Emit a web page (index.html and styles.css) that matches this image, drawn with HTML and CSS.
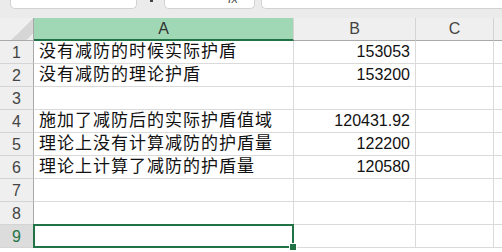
FILE: index.html
```html
<!DOCTYPE html>
<html lang="zh-CN">
<head>
    <meta charset="UTF-8">
    <title>Sheet1</title>
    <link rel="stylesheet" href="styles.css">
</head>
<body>

    <div class="toolbar">
        <div class="box name-box"></div>
        <span class="caret"></span>
        <div class="box fx-box"><span class="fx">fx</span></div>
        <div class="box formula-box"></div>
    </div>

    <div class="sheet">
        <div class="corner"></div>
        <div class="col-head active">A</div>
        <div class="col-head">B</div>
        <div class="col-head">C</div>
        <div class="col-head last"></div>

        <div class="row-head">1</div>
        <div class="cell">没有减防的时候实际护盾</div>
        <div class="cell num">153053</div>
        <div class="cell"></div>
        <div class="cell last"></div>

        <div class="row-head">2</div>
        <div class="cell">没有减防的理论护盾</div>
        <div class="cell num">153200</div>
        <div class="cell"></div>
        <div class="cell last"></div>

        <div class="row-head">3</div>
        <div class="cell"></div>
        <div class="cell"></div>
        <div class="cell"></div>
        <div class="cell last"></div>

        <div class="row-head">4</div>
        <div class="cell">施加了减防后的实际护盾值域</div>
        <div class="cell num">120431.92</div>
        <div class="cell"></div>
        <div class="cell last"></div>

        <div class="row-head">5</div>
        <div class="cell">理论上没有计算减防的护盾量</div>
        <div class="cell num">122200</div>
        <div class="cell"></div>
        <div class="cell last"></div>

        <div class="row-head">6</div>
        <div class="cell">理论上计算了减防的护盾量</div>
        <div class="cell num">120580</div>
        <div class="cell"></div>
        <div class="cell last"></div>

        <div class="row-head">7</div>
        <div class="cell"></div>
        <div class="cell"></div>
        <div class="cell"></div>
        <div class="cell last"></div>

        <div class="row-head">8</div>
        <div class="cell"></div>
        <div class="cell"></div>
        <div class="cell"></div>
        <div class="cell last"></div>

        <div class="row-head active">9</div>
        <div class="cell selected"><span class="handle"></span></div>
        <div class="cell"></div>
        <div class="cell"></div>
        <div class="cell last"></div>
    </div>

</body>
</html>
```

FILE: styles.css
```css
/* Page */
body {
    margin: 0;
    width: 502px;
    height: 252px;
    overflow: hidden;
    background: #ffffff;
    font-family: "Liberation Sans", "Noto Sans CJK SC", sans-serif;
}

/* Formula bar strip */
.toolbar {
    display: flex;
    align-items: flex-start;
    height: 18px;
    background: #ebebeb;
}

.box {
    box-sizing: border-box;
    height: 9px;
    background: #ffffff;
    border: 1px solid #d2d2d2;
    border-top: none;
    border-radius: 0 0 5px 5px;
}

.name-box {
    width: 127px;
    margin-left: 10px;
}

.caret {
    width: 3px;
    height: 2px;
    margin: 0 11px 0 13px;
    background: #444;
}

.fx-box {
    position: relative;
    width: 91px;
}

.fx {
    position: absolute;
    right: 16px;
    top: -9px;
    font-size: 13px;
    font-style: italic;
    color: #555;
}

.formula-box {
    flex: 1;
    margin-left: 6px;
    border-right: none;
    border-radius: 0 0 0 5px;
}

/* Grid */
.sheet {
    display: grid;
    grid-template-columns: 34px 260px 122px 78px 1fr;
    grid-template-rows: 23px;
    grid-auto-rows: 23px;
}

.sheet > div {
    box-sizing: border-box;
}

.corner {
    background: #efefef linear-gradient(135deg, transparent 60%, #d6d6d6 60%, #d6d6d6 88%, transparent 88%);
    border-right: 1px solid #a9a9a9;
    border-bottom: 1px solid #a9a9a9;
}

.col-head {
    background: #efefef;
    border-right: 1px solid #d4d4d4;
    border-bottom: 1px solid #a9a9a9;
    color: #444;
    font-size: 16px;
    text-align: center;
    line-height: 22px;
}

.col-head.active {
    background: #a0d8b5;
    border-bottom: 2px solid #217346;
    color: #333;
}

.row-head {
    background: #efefef;
    border-right: 1px solid #a9a9a9;
    border-bottom: 1px solid #d4d4d4;
    color: #444;
    font-size: 16px;
    text-align: center;
    line-height: 23px;
}

.row-head.active {
    background: #dcdcdc;
    color: #217346;
}

.cell {
    border-right: 1px solid #dadada;
    border-bottom: 1px solid #dadada;
    padding: 0 5px;
    color: #111;
    font-size: 17px;
    letter-spacing: 1px;
    line-height: 22px;
    white-space: nowrap;
}

.cell.num {
    font-size: 16px;
    letter-spacing: 0;
    text-align: right;
}

.last {
    border-right: none;
}

/* Active cell */
.cell.selected {
    position: relative;
}

.cell.selected::before {
    content: "";
    position: absolute;
    left: -1px;
    top: -1px;
    right: -1px;
    bottom: -1px;
    border: 2px solid #217346;
}

.handle {
    position: absolute;
    right: -4px;
    bottom: -4px;
    width: 6px;
    height: 6px;
    background: #217346;
    border: 1px solid #ffffff;
}
```
